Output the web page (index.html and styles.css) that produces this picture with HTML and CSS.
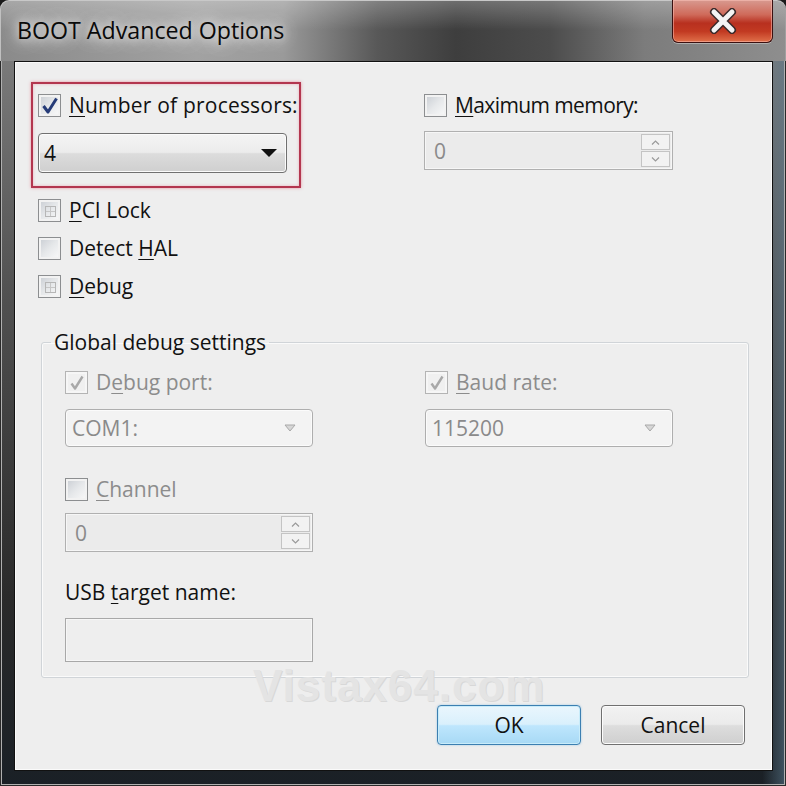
FILE: index.html
```html
<!DOCTYPE html>
<html>
<head>
<meta charset="utf-8">
<link rel="stylesheet" href="styles.css">
</head>
<body>
<div class="window">
  <div class="titlebar">
    <div class="title">BOOT Advanced Options</div>
    <div class="close">
      <svg width="30" height="26" viewBox="0 0 30 26">
        <path d="M6 4 L24 22 M24 4 L6 22" stroke="#3a2a2a" stroke-width="8" stroke-linecap="round"/>
        <path d="M6 4 L24 22 M24 4 L6 22" stroke="#f4f4f4" stroke-width="5" stroke-linecap="round"/>
      </svg>
    </div>
  </div>
  <div class="client">
    <div class="top">
      <div class="leftcol">
        <div class="highlight">
          <div class="row">
            <span class="cb checked"></span>
            <span class="lbl wide"><u>N</u>umber of processors:</span>
          </div>
          <div class="combo main">
            <span>4</span>
            <svg class="arr" width="16" height="9" viewBox="0 0 16 9"><path d="M0 0 H16 L8 8 Z" fill="#111"/></svg>
          </div>
        </div>
        <div class="opts">
          <div class="row"><span class="cb grid"></span><span class="lbl"><u>P</u>CI Lock</span></div>
          <div class="row"><span class="cb"></span><span class="lbl">Detect <u>H</u>AL</span></div>
          <div class="row"><span class="cb grid"></span><span class="lbl"><u>D</u>ebug</span></div>
        </div>
      </div>
      <div class="rightcol">
        <div class="row"><span class="cb"></span><span class="lbl narrow"><u>M</u>aximum memory:</span></div>
        <div class="spin">
          <span class="val">0</span>
          <div class="btns">
            <span class="sb"><svg width="9" height="5" viewBox="0 0 9 5"><path d="M1 4.5 L4.5 1 L8 4.5" fill="none" stroke="#9a9a9a" stroke-width="1.2"/></svg></span>
            <span class="sb"><svg width="9" height="5" viewBox="0 0 9 5"><path d="M1 0.5 L4.5 4 L8 0.5" fill="none" stroke="#9a9a9a" stroke-width="1.2"/></svg></span>
          </div>
        </div>
      </div>
    </div>

    <fieldset class="group">
      <legend>Global debug settings</legend>
      <div class="gcols">
        <div class="gcol">
          <div class="row"><span class="cb checked disabled"></span><span class="lbl dis">D<u>e</u>bug port:</span></div>
          <div class="combo dis">
            <span>COM1:</span>
            <svg class="arr" width="12" height="8" viewBox="0 0 12 8"><path d="M1 1 H11 L6 7 Z" fill="#d6d6d6" stroke="#a8a8a8" stroke-width="1"/></svg>
          </div>
          <div class="row chan"><span class="cb"></span><span class="lbl dis"><u>C</u>hannel</span></div>
          <div class="spin small">
            <span class="val">0</span>
            <div class="btns">
              <span class="sb"><svg width="9" height="5" viewBox="0 0 9 5"><path d="M1 4.5 L4.5 1 L8 4.5" fill="none" stroke="#9a9a9a" stroke-width="1.2"/></svg></span>
              <span class="sb"><svg width="9" height="5" viewBox="0 0 9 5"><path d="M1 0.5 L4.5 4 L8 0.5" fill="none" stroke="#9a9a9a" stroke-width="1.2"/></svg></span>
            </div>
          </div>
          <div class="usb">USB <u>t</u>arget name:</div>
          <div class="textbox"></div>
        </div>
        <div class="gcol">
          <div class="row"><span class="cb checked disabled"></span><span class="lbl dis"><u>B</u>aud rate:</span></div>
          <div class="combo dis">
            <span>115200</span>
            <svg class="arr" width="12" height="8" viewBox="0 0 12 8"><path d="M1 1 H11 L6 7 Z" fill="#d6d6d6" stroke="#a8a8a8" stroke-width="1"/></svg>
          </div>
        </div>
      </div>
    </fieldset>

    <div class="footer">
      <div class="watermark">Vistax64.com</div>
      <button class="btn ok">OK</button>
      <button class="btn">Cancel</button>
    </div>
  </div>
</div>
</body>
</html>
```
FILE: styles.css
```css
* { box-sizing: border-box; }
html, body { margin: 0; padding: 0; background: #1a1a1a; }
body { font-family: "Open Sans", "Noto Sans", sans-serif; }

.window {
  width: 786px;
  height: 786px;
  padding: 0 13px 15px 14px;
  display: flex;
  flex-direction: column;
  border-radius: 9px 9px 0 0;
  background:
    linear-gradient(90deg, rgba(0,0,0,0) 0, rgba(0,0,0,0) 97%, rgba(90,120,140,0.6) 100%),
    linear-gradient(180deg, #8e8e8e 0, #7a7a7a 60px, #505050 300px, #2a2a2a 600px, #1a2026 100%);
  box-shadow: inset 0 0 0 1px #2a2a2a, inset 0 0 0 2px #b0b0b0;
  position: relative;
}

.titlebar {
  height: 61px;
  display: flex;
  align-items: flex-start;
  margin: 0 -13px 0 -14px;
  padding: 0 13px 0 17px;
  border-radius: 9px 9px 0 0;
  background:
    linear-gradient(180deg, rgba(255,255,255,0.25) 0, rgba(255,255,255,0) 30px),
    linear-gradient(90deg, #8a8a8a 0, #a2a2a2 25%, #9a9a9a 36%, #585858 48%, #3e3e3e 58%, #4c4c4c 70%, #7c7c7c 82%, #8e8e8e 100%);
  box-shadow: inset 0 1px 0 #c8c8c8, inset 1px 0 0 #c0c0c0, inset -1px 0 0 #a0a0a0;
}

.title {
  margin-top: 14px;
  font-size: 23.2px;
  color: #0a0a0a;
  text-shadow: 0 0 10px rgba(255,255,255,0.9), 0 0 18px rgba(255,255,255,0.8), 0 0 24px rgba(255,255,255,0.6);
}

.close {
  margin-left: auto;
  width: 101px;
  height: 43px;
  border: 1px solid #3a1010;
  border-top: none;
  border-radius: 0 0 6px 6px;
  display: flex;
  align-items: center;
  justify-content: center;
  background: linear-gradient(180deg, #d89a90 0, #cf6a5a 35%, #b8301f 55%, #c23a22 75%, #e0704a 100%);
  box-shadow: inset 0 0 0 1px rgba(255,200,190,0.5), 0 1px 0 #b0b0b0;
}

.client {
  flex: 1;
  background: #eeeeee;
  border: 1px solid #111;
  box-shadow: inset 0 0 0 1px #fafafa;
  padding: 20px 23px 0 16px;
  display: flex;
  flex-direction: column;
  font-size: 21px;
  color: #111;
}

.top { display: flex; }
.leftcol { width: 270px; flex: none; }
.rightcol { margin-left: 123px; padding-top: 11px; }

.highlight {
  border: 2px solid #b3364f;
  box-shadow: 0 0 3px rgba(230,110,130,0.7), inset 0 0 3px rgba(230,110,130,0.5);
  padding: 9px 0 13px 5px;
}

.row { display: flex; align-items: center; height: 24px; }
.cb {
  width: 23px;
  height: 23px;
  flex: none;
  border: 1px solid #8c8e90;
  background: linear-gradient(135deg, #c8ccd2 0, #e6e8ea 50%, #fafafa 100%);
  box-shadow: inset 0 0 0 2px #f2f2f2;
  margin-right: 8px;
  position: relative;
}
.cb.grid::after {
  content: "";
  position: absolute;
  left: 6px; top: 6px; width: 9px; height: 9px;
  border: 1px solid #b6b6b6;
  background: linear-gradient(90deg, transparent 4px, #c6c6c6 4px, #c6c6c6 5px, transparent 5px), linear-gradient(0deg, transparent 4px, #c6c6c6 4px, #c6c6c6 5px, transparent 5px);
}
.cb.checked::after {
  content: "";
  position: absolute;
  left: 3px; top: 2px; width: 16px; height: 17px;
  background: no-repeat center / 16px 17px url("data:image/svg+xml,%3Csvg xmlns='http://www.w3.org/2000/svg' width='16' height='17' viewBox='0 0 16 17'%3E%3Cpath d='M1.5 9 L6 15 L14.5 1.5' fill='none' stroke='%23263c78' stroke-width='3' stroke-linejoin='round'/%3E%3C/svg%3E");
}
.cb.disabled { border-color: #b4b4b4; background: #f0f0f0; box-shadow: inset 0 0 0 2px #f6f6f6; }
.cb.disabled::after {
  background-image: url("data:image/svg+xml,%3Csvg xmlns='http://www.w3.org/2000/svg' width='16' height='17' viewBox='0 0 16 17'%3E%3Cpath d='M2.5 9.5 L6 14.5 L13.5 2.5' fill='none' stroke='%23a8a8a8' stroke-width='2.4' stroke-linejoin='round'/%3E%3C/svg%3E");
}
.lbl { white-space: nowrap; }
.lbl.wide { letter-spacing: 0.2px; }
.lbl.narrow { letter-spacing: -0.6px; }
.lbl.dis { color: #8c8c8c; }
u { text-decoration-thickness: 1px; text-underline-offset: 3px; }

.combo {
  margin-top: 16px;
  height: 40px;
  width: 249px;
  border: 1px solid #707070;
  border-radius: 4px;
  display: flex;
  align-items: center;
  padding: 0 9px 0 5px;
  background: linear-gradient(180deg, #f4f4f4 0, #ececec 48%, #dcdcdc 52%, #cfcfcf 100%);
  box-shadow: inset 0 0 0 1px #fbfbfb;
}
.combo .arr { margin-left: auto; }
.combo.dis {
  margin-top: 15px;
  height: 38px;
  width: 248px;
  border-color: #aeaeae;
  background: #f3f3f3;
  color: #8a8a8a;
  padding: 0 16px 0 6px;
}

.opts { margin-top: 10px; padding-left: 7px; display: flex; flex-direction: column; gap: 14px; }

.spin {
  margin-top: 14px;
  width: 249px;
  height: 39px;
  border: 1px solid #b0b0b0;
  background: #ebebeb;
  display: flex;
  align-items: stretch;
  color: #8a8a8a;
  box-shadow: inset 0 0 0 1px #f6f6f6;
}
.spin .val { padding-left: 9px; align-self: center; }
.spin .btns { margin-left: auto; display: flex; flex-direction: column; padding: 2px 2px 2px 0; gap: 1px; }
.spin .sb {
  flex: 1;
  width: 29px;
  border: 1px solid #c4c4c4;
  background: #f2f2f2;
  display: flex;
  align-items: center;
  justify-content: center;
}

.group {
  margin: 30px 0 0 10px;
  padding: 14px 0 15px 23px;
  border: 1px solid #d0d4d8;
  border-radius: 3px;
  min-width: 0;
  box-shadow: inset 0 0 0 1px #fafafa;
}
.group legend {
  padding: 0 3px;
  margin-left: -14px;
  font-size: 21px;
  color: #111;
}
.gcols { display: flex; gap: 112px; }
.gcol { width: 248px; display: flex; flex-direction: column; }
.row.chan { margin-top: 30px; }
.spin.small { margin-top: 12px; width: 248px; }
.usb { margin-top: 26px; height: 30px; }
.textbox {
  margin-top: 10px;
  height: 44px;
  width: 248px;
  border: 1px solid #a8a8a8;
  background: #eeeeee;
  box-shadow: inset 0 0 0 1px #f6f6f6;
}

.footer {
  position: relative;
  margin-top: 27px;
  display: flex;
  justify-content: flex-end;
  gap: 20px;
  padding-right: 4px;
}
.watermark {
  position: absolute;
  left: 222px;
  top: -44px;
  font-family: "Liberation Sans", sans-serif;
  font-weight: bold;
  font-size: 44px;
  letter-spacing: 1px;
  color: #e4e4e4;
  text-shadow: 1px 1px 0 #d8d8d8;
}
.btn {
  position: relative;
  width: 144px;
  height: 40px;
  border: 1px solid #707070;
  border-radius: 4px;
  font-family: inherit;
  font-size: 21px;
  color: #111;
  background: linear-gradient(180deg, #f2f2f2 0, #ebebeb 48%, #dddddd 52%, #cfcfcf 100%);
  box-shadow: inset 0 0 0 1px #fcfcfc;
  padding: 0;
}
.btn.ok {
  border-color: #3c7fb1;
  background: linear-gradient(180deg, #eaf6fd 0, #d9f0fc 48%, #bee6fd 52%, #a7d9f5 100%);
  box-shadow: inset 0 0 0 1px #c8ecfa, 0 0 2px rgba(60,160,220,0.5);
}
```
